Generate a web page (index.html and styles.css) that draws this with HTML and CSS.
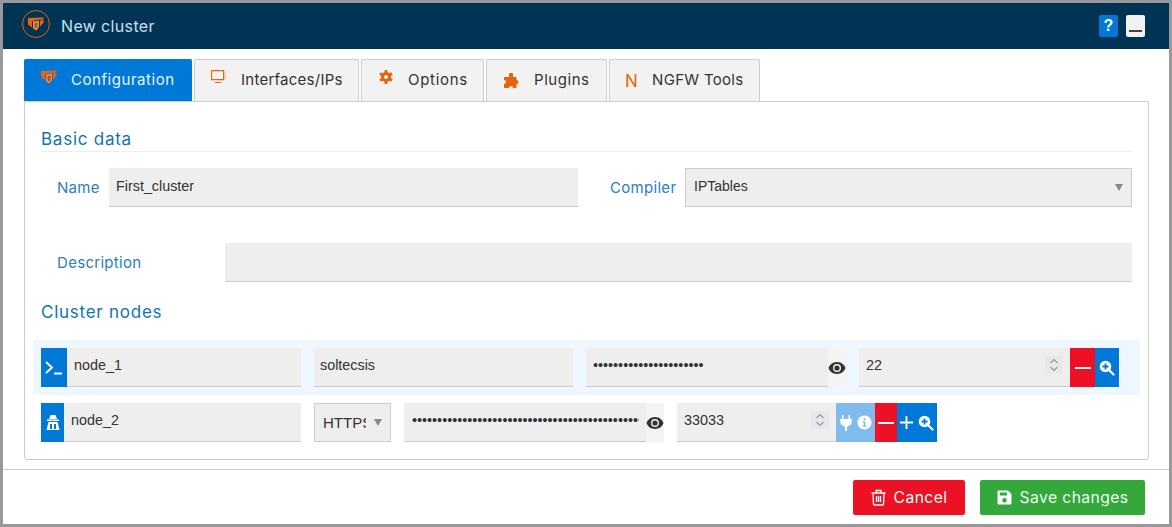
FILE: index.html
```html
<!DOCTYPE html>
<html lang="en">
  <head>
    <meta charset="UTF-8" />
    <title>New cluster</title>
    <link rel="stylesheet" href="styles.css">
  </head>
  <body>
    <svg class="defs" width="0" height="0">
      <symbol id="firewall" viewBox="0 0 16 14">
        <path fill="#e8640c" d="M0 1 15.500 .5 15.500 2.500 8 3 4 4.500 4 10.500 0 7.500z"/>
        <path fill="#f08a48" d="M5 4.500 11 3.500 11 10 8.500 13.500 5 11.500z"/>
        <path fill="#a5561d" d="M6.500 6 9.500 5.500 9.500 9.500 8 11.500 6.500 10.500z"/>
        <path fill="#e8640c" d="M12 3.500 15.500 3 15.500 6 12 9.500z"/>
      </symbol>
      <symbol id="eye" viewBox="0 0 18 14">
        <path fill-rule="evenodd" fill="#333" d="M9 1C4.500 1 1.500 4 0.500 7 1.500 10 4.500 13 9 13s7.500-3 8.500-6C16.500 4 13.500 1 9 1zM9 3a4 4 0 1 1 0 8 4 4 0 0 1 0-8z"/>
        <circle cx="9" cy="7" r="2.600" fill="#333"/>
      </symbol>
      <symbol id="zoomplus" viewBox="0 0 16 16">
        <path stroke="#fff" stroke-width="2.200" stroke-linecap="round" d="M10 10l4.500 4.500"/>
        <circle cx="6.500" cy="6.500" r="5.800" fill="#fff"/>
        <path stroke="#0078d7" stroke-width="1.800" d="M3.500 6.500h6M6.500 3.500v6"/>
      </symbol>
    </svg>

    <div class="dialog">
      <!-- Title bar -->
      <header class="title-bar">
        <svg class="logo" width="30" height="30" viewBox="0 0 30 30">
          <circle cx="15" cy="15" r="13.500" fill="none" stroke="#d9640f" stroke-width="1"/>
          <use href="#firewall" x="7" y="8" width="16" height="14"/>
        </svg>
        <h1 class="title">New cluster</h1>
        <button class="btn-help">?</button>
        <button class="btn-min"><span></span></button>
      </header>

      <!-- Tabs -->
      <div class="content">
        <nav class="tabs">
          <a class="tab active tab-config">
            <svg width="16" height="14"><use href="#firewall"/></svg>
            Configuration
          </a>
          <a class="tab tab-ifaces">
            <svg width="16" height="14" viewBox="0 0 16 14"><path fill="none" stroke="#e8640c" stroke-width="1.100" d="M.6.600h12v9h-12zM4 12.500h6"/><path fill="#f8c8a4" d="M13 1.500h2v7l-2 1.500z"/></svg>
            Interfaces/IPs
          </a>
          <a class="tab tab-options">
            <svg width="14" height="14" viewBox="0 0 14 14"><circle cx="7" cy="7" r="3.500" fill="none" stroke="#e8640c" stroke-width="3"/><path stroke="#e8640c" stroke-width="2.800" d="M7 0v3M7 11v3M1 3.500l2.500 1.500M10.500 9l2.500 1.500M1 10.500L3.500 9M10.500 5L13 3.500"/></svg>
            Options
          </a>
          <a class="tab tab-plugins">
            <svg class="icon-low" width="16" height="16" viewBox="0 0 16 16"><path fill="#e8640c" d="M6 1.500a2 2 0 0 1 4 0V4h3.500v3a2 2 0 1 1 0 4v4H10a2 2 0 1 0-4 0H1v-4a2 2 0 1 0 0-4V4h5z"/></svg>
            Plugins
          </a>
          <a class="tab tab-ngfw">
            <span class="n-icon">N</span>
            NGFW Tools
          </a>
        </nav>

        <div class="panel">
          <h2 class="section section-first">Basic data</h2>

          <div class="form-row row-name">
            <label class="label label-name">Name</label>
            <input class="field field-name" type="text" value="First_cluster" />
            <label class="label label-compiler">Compiler</label>
            <div class="select select-compiler">IPTables<i class="caret"></i></div>
          </div>

          <div class="form-row row-desc">
            <label class="label label-desc">Description</label>
            <input class="field field-grow" type="text" value="" />
          </div>

          <h2 class="section section-nodes">Cluster nodes</h2>

          <!-- Node 1 -->
          <div class="node node-active">
            <span class="addon addon-blue w26">
              <svg width="18" height="14" viewBox="0 0 18 14"><path fill="none" stroke="#fff" stroke-width="1.900" d="M1 1l6 5.500L1 12M9 12.500h8"/></svg>
            </span>
            <input class="field w234" type="text" value="node_1" />
            <input class="field w259 ml13 field-user" type="text" value="soltecsis" />
            <input class="field w242 ml13 pw" type="password" value="abcdefghijklmnopqrstuv" />
            <span class="eye"><svg width="18" height="14"><use href="#eye"/></svg></span>
            <input class="field w211 ml13" type="number" value="22" />
            <span class="addon addon-red w25"><i class="minus"></i></span>
            <span class="addon addon-blue w24"><svg width="16" height="16"><use href="#zoomplus"/></svg></span>
          </div>

          <!-- Node 2 -->
          <div class="node">
            <span class="addon addon-blue w23">
              <svg width="14" height="17" viewBox="0 0 14 17"><path fill="#fff" d="M4.500 1h5l1.500 4H3zM1 5.500h12V7H1z"/><path fill="#fff" fill-rule="evenodd" d="M2.500 8h9l2 8H.5zM4 10v5h2v-5zM8 10v5h2v-5z"/></svg>
            </span>
            <input class="field w237" type="text" value="node_2" />
            <div class="select select-proto ml13"><span class="clip">HTTPS</span><i class="caret"></i></div>
            <input class="field w242 ml13 pw pw-long" type="password" value="abcdefghijklmnopqrstuvwxyzabcdefghijklmnopqrst" />
            <span class="eye"><svg width="18" height="14"><use href="#eye"/></svg></span>
            <input class="field w159 ml13" type="number" value="33033" />
            <span class="addon addon-light w39">
              <svg width="12" height="16" viewBox="0 0 12 16"><path fill="#fff" d="M2 0h1.500v4h5V0H10v4h2v2h-.5v3L7 12v4H5v-4L.5 9V6H0V4h2z"/></svg>
              <svg width="15" height="15" viewBox="0 0 16 16"><circle cx="8" cy="8" r="7.500" fill="#fff"/><path fill="#7fbbec" d="M7 3.500h2v2H7zM6 7h3v4.500h1v1H6v-1h1V8H6z"/></svg>
            </span>
            <span class="addon addon-red w22"><i class="minus"></i></span>
            <span class="addon addon-blue w40">
              <svg width="13" height="13" viewBox="0 0 13 13"><path stroke="#fff" stroke-width="1.800" d="M0 6.500h13M6.500 0v13"/></svg>
              <svg width="16" height="16"><use href="#zoomplus"/></svg>
            </span>
          </div>
        </div>
      </div>

      <!-- Footer -->
      <footer class="footer">
        <button class="btn btn-cancel">
          <svg width="15" height="17" viewBox="0 0 15 16"><path fill="none" stroke="#fff" stroke-width="1.300" d="M.5 3.500h14M2 3.500l.5 11a1 1 0 0 0 1 1h8a1 1 0 0 0 1-1l.5-11M5 3.500V1h5v2.500M5.500 6.500v6M7.500 6.500v6M9.500 6.500v6"/></svg>
          Cancel
        </button>
        <button class="btn btn-save">
          <svg width="15" height="15" viewBox="0 0 15 15"><path fill-rule="evenodd" fill="#fff" d="M1.500 .5h9.500l3.500 3.500v9.500a1 1 0 0 1-1 1h-12a1 1 0 0 1-1-1v-12a1 1 0 0 1 1-1zM3 2.500v3h7v-3zM7.500 8a2.300 2.300 0 1 0 0 4.600 2.300 2.300 0 0 0 0-4.600z"/></svg>
          Save changes
        </button>
      </footer>
    </div>
  </body>
</html>
```

FILE: styles.css
```css
* {
  box-sizing: border-box;
}

html,
body {
  margin: 0;
  height: 527px;
  overflow: hidden;
  background: #999;
}

body {
  padding: 3px;
  font-family: Inter, "Open Sans", sans-serif;
}

.defs {
  position: absolute;
}

.dialog {
  display: flex;
  flex-direction: column;
  height: 521px;
  background: #fff;
}

/* Title bar */
.title-bar {
  display: flex;
  align-items: center;
  height: 46px;
  padding: 0 24px 0 18px;
  background: #003354;
}

.logo {
  flex: none;
  margin-top: -4px;
}

.title {
  flex: 1;
  margin: 0 0 0 10px;
  font-size: 16px;
  font-weight: 400;
  letter-spacing: 0.35px;
  color: #c5e2f3;
}

.btn-help,
.btn-min {
  width: 19px;
  height: 22px;
  padding: 0;
  border: 0;
  border-radius: 2px;
}

.btn-help {
  margin-right: 8px;
  background: #0078d7;
  color: #fff;
  font: 700 16px "Liberation Sans", sans-serif;
}

.btn-min {
  display: flex;
  align-items: flex-end;
  justify-content: center;
  padding-bottom: 5px;
  background: #f2f2f2;
}

.btn-min span {
  width: 13px;
  height: 2px;
  background: #444;
}

/* Tabs */
.content {
  flex: none;
  height: 421px;
  padding: 10px 20px 0 21px;
  border-bottom: 1px solid #ccc;
}

.tabs {
  display: flex;
  gap: 2px;
  height: 42px;
}

.tab {
  display: flex;
  align-items: center;
  height: 42px;
  padding-bottom: 2px;
  border: 1px solid #ccc;
  border-bottom: 0;
  border-radius: 2px 2px 0 0;
  background: #f2f2f2;
  color: #333;
  font-size: 15px;
  letter-spacing: 0.45px;
  white-space: nowrap;
}

.tab svg {
  flex: none;
  margin-top: -6px;
}

.tab svg.icon-low {
  margin-top: 2px;
}

.tab.active {
  border-color: #0078d7;
  background: #0078d7;
  color: #e6f4ff;
}

.tab-config {
  width: 168px;
  padding-left: 16px;
  gap: 14px;
  letter-spacing: 0.55px;
}

.tab-ifaces {
  width: 165px;
  padding-left: 16px;
  gap: 14px;
  letter-spacing: 0.25px;
}

.tab-options {
  width: 123px;
  padding-left: 17px;
  gap: 15px;
  letter-spacing: 0.7px;
}

.tab-plugins {
  width: 121px;
  padding-left: 16px;
  gap: 15px;
  letter-spacing: 0.55px;
}

.tab-ngfw {
  width: 151px;
  padding-left: 15px;
  gap: 14px;
  letter-spacing: 0.3px;
}

.n-icon {
  flex: none;
  margin-top: 3px;
  color: #e8640c;
  font-size: 17px;
  font-weight: 400;
}

/* Panel */
.panel {
  height: 359px;
  padding: 0 16px;
  border: 1px solid #ccc;
  border-radius: 0 0 3px 3px;
}

.section {
  margin: 0;
  font-size: 17px;
  font-weight: 400;
  letter-spacing: 0.75px;
  color: #1273b4;
}

.section-first {
  margin-top: 27px;
  height: 23px;
  line-height: 20px;
  border-bottom: 1px solid #eee;
}

.section-nodes {
  margin-top: 20px;
  line-height: 20px;
}

.form-row {
  display: flex;
  align-items: center;
}

.row-name {
  margin-top: 16px;
}

.row-desc {
  margin-top: 36px;
}

.label {
  flex: none;
  font-size: 15px;
  letter-spacing: 0.3px;
  color: #2b80bd;
}

.label-name {
  width: 68px;
  padding-left: 16px;
}

.label-compiler {
  width: 107px;
  padding-left: 32px;
}

.label-desc {
  width: 184px;
  padding-left: 16px;
}

.field {
  flex: none;
  height: 39px;
  padding: 0 7px 3px;
  border: 0;
  border-bottom: 1px solid #ccc;
  border-radius: 0;
  outline: 0;
  background: #eee;
  color: #333;
  font: 14.350px "Liberation Sans", sans-serif;
}

.node .field {
  padding-bottom: 5px;
}

.node .field-user {
  padding-left: 6px;
}

.field-name {
  width: 469px;
}

.field-grow {
  flex: 1;
}

.select {
  position: relative;
  height: 39px;
  padding: 9px 8px 0;
  border: 1px solid #ccc;
  background: #eee;
  color: #333;
  font: 14px "Liberation Sans", sans-serif;
}

.select-compiler {
  flex: 1;
}

.select-proto {
  flex: none;
  width: 77px;
  padding-top: 10px;
  font-size: 15px;
}

.clip {
  display: block;
  width: 43px;
  overflow: hidden;
}

.caret {
  position: absolute;
  top: 15px;
  right: 8px;
  border: 4px solid transparent;
  border-top: 7px solid #888;
  border-bottom: 0;
}

/* Node rows */
.node {
  display: flex;
  align-items: center;
  height: 55px;
  margin: 0 -8px;
  padding: 0 8px;
}

.node-active {
  margin-top: 18px;
  background: #eef6fe;
}

.addon {
  display: flex;
  flex: none;
  align-items: center;
  justify-content: center;
  gap: 5px;
  height: 39px;
}

.addon-blue {
  background: #0078d7;
}

.addon-red {
  background: #ed1125;
}

.addon-light {
  background: #7fbbec;
}

.minus {
  width: 16px;
  height: 2px;
  background: #fff;
}

.eye {
  display: flex;
  flex: none;
  align-items: center;
  justify-content: center;
  width: 18px;
  height: 39px;
  background: #f4f4f4;
}

.node .pw-long {
  padding-left: 8px;
}

input[type="number"]::-webkit-inner-spin-button {
  -webkit-appearance: none;
  width: 18px;
  height: 18px;
  opacity: 1;
  background: #e8e8ec url("data:image/svg+xml,%3Csvg xmlns='http://www.w3.org/2000/svg' width='18' height='18'%3E%3Cpath fill='none' stroke='%23999' stroke-width='1.200' d='M5.500 7 9 3.500 12.500 7M5.500 11 9 14.500 12.500 11'/%3E%3C/svg%3E") no-repeat;
}

.ml13 {
  margin-left: 13px;
}

.w22 { width: 22px; }
.w23 { width: 23px; }
.w24 { width: 24px; }
.w25 { width: 25px; }
.w26 { width: 26px; }
.w39 { width: 39px; }
.w40 { width: 40px; }
.w159 { width: 159px; }
.w211 { width: 211px; }
.w234 { width: 234px; }
.w237 { width: 237px; }
.w242 { width: 242px; }
.w259 { width: 259px; }

/* Footer */
.footer {
  display: flex;
  justify-content: flex-end;
  gap: 15px;
  padding: 10px 24px 0 0;
}

.btn {
  display: flex;
  align-items: center;
  justify-content: center;
  gap: 8px;
  height: 35px;
  border: 0;
  border-radius: 2px;
  color: #eafff0;
  font-family: Inter, "Open Sans", sans-serif;
  font-size: 15.700px;
  letter-spacing: 0.4px;
}

.btn-cancel {
  width: 112px;
  background: #ed1125;
}

.btn-save {
  width: 165px;
  background: #34a83a;
}
```
